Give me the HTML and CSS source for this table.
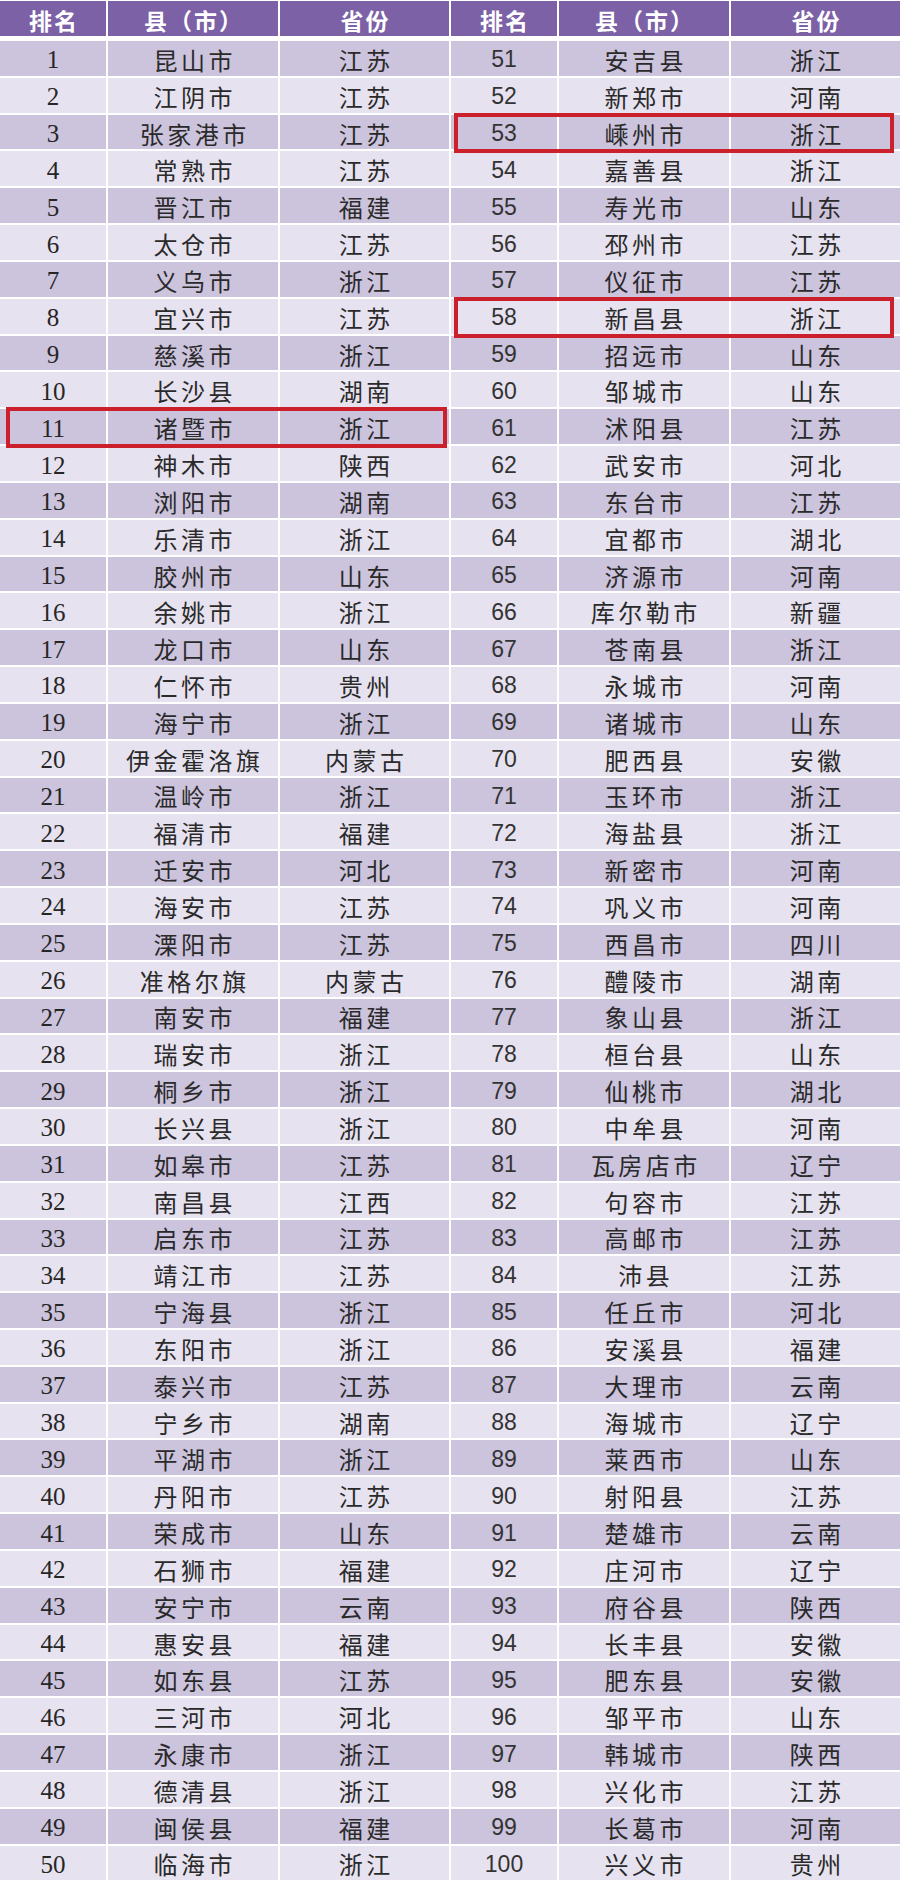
FILE: index.html
```html
<!DOCTYPE html>
<html lang="zh-CN">
<head>
<meta charset="utf-8">
<title>县市排名</title>
<link rel="stylesheet" href="styles.css">
</head>
<body>
<div class="sheet">
  <div class="half left">
    <div class="row head"><div class="c">排名</div><div class="c">县（市）</div><div class="c">省份</div></div>
    <div class="body">
      <div class="row"><div class="c n">1</div><div class="c t">昆山市</div><div class="c t">江苏</div></div>
      <div class="row"><div class="c n">2</div><div class="c t">江阴市</div><div class="c t">江苏</div></div>
      <div class="row"><div class="c n">3</div><div class="c t">张家港市</div><div class="c t">江苏</div></div>
      <div class="row"><div class="c n">4</div><div class="c t">常熟市</div><div class="c t">江苏</div></div>
      <div class="row"><div class="c n">5</div><div class="c t">晋江市</div><div class="c t">福建</div></div>
      <div class="row"><div class="c n">6</div><div class="c t">太仓市</div><div class="c t">江苏</div></div>
      <div class="row"><div class="c n">7</div><div class="c t">义乌市</div><div class="c t">浙江</div></div>
      <div class="row"><div class="c n">8</div><div class="c t">宜兴市</div><div class="c t">江苏</div></div>
      <div class="row"><div class="c n">9</div><div class="c t">慈溪市</div><div class="c t">浙江</div></div>
      <div class="row"><div class="c n">10</div><div class="c t">长沙县</div><div class="c t">湖南</div></div>
      <div class="row mark"><div class="c n">11</div><div class="c t">诸暨市</div><div class="c t">浙江</div></div>
      <div class="row"><div class="c n">12</div><div class="c t">神木市</div><div class="c t">陕西</div></div>
      <div class="row"><div class="c n">13</div><div class="c t">浏阳市</div><div class="c t">湖南</div></div>
      <div class="row"><div class="c n">14</div><div class="c t">乐清市</div><div class="c t">浙江</div></div>
      <div class="row"><div class="c n">15</div><div class="c t">胶州市</div><div class="c t">山东</div></div>
      <div class="row"><div class="c n">16</div><div class="c t">余姚市</div><div class="c t">浙江</div></div>
      <div class="row"><div class="c n">17</div><div class="c t">龙口市</div><div class="c t">山东</div></div>
      <div class="row"><div class="c n">18</div><div class="c t">仁怀市</div><div class="c t">贵州</div></div>
      <div class="row"><div class="c n">19</div><div class="c t">海宁市</div><div class="c t">浙江</div></div>
      <div class="row"><div class="c n">20</div><div class="c t">伊金霍洛旗</div><div class="c t">内蒙古</div></div>
      <div class="row"><div class="c n">21</div><div class="c t">温岭市</div><div class="c t">浙江</div></div>
      <div class="row"><div class="c n">22</div><div class="c t">福清市</div><div class="c t">福建</div></div>
      <div class="row"><div class="c n">23</div><div class="c t">迁安市</div><div class="c t">河北</div></div>
      <div class="row"><div class="c n">24</div><div class="c t">海安市</div><div class="c t">江苏</div></div>
      <div class="row"><div class="c n">25</div><div class="c t">溧阳市</div><div class="c t">江苏</div></div>
      <div class="row"><div class="c n">26</div><div class="c t">准格尔旗</div><div class="c t">内蒙古</div></div>
      <div class="row"><div class="c n">27</div><div class="c t">南安市</div><div class="c t">福建</div></div>
      <div class="row"><div class="c n">28</div><div class="c t">瑞安市</div><div class="c t">浙江</div></div>
      <div class="row"><div class="c n">29</div><div class="c t">桐乡市</div><div class="c t">浙江</div></div>
      <div class="row"><div class="c n">30</div><div class="c t">长兴县</div><div class="c t">浙江</div></div>
      <div class="row"><div class="c n">31</div><div class="c t">如皋市</div><div class="c t">江苏</div></div>
      <div class="row"><div class="c n">32</div><div class="c t">南昌县</div><div class="c t">江西</div></div>
      <div class="row"><div class="c n">33</div><div class="c t">启东市</div><div class="c t">江苏</div></div>
      <div class="row"><div class="c n">34</div><div class="c t">靖江市</div><div class="c t">江苏</div></div>
      <div class="row"><div class="c n">35</div><div class="c t">宁海县</div><div class="c t">浙江</div></div>
      <div class="row"><div class="c n">36</div><div class="c t">东阳市</div><div class="c t">浙江</div></div>
      <div class="row"><div class="c n">37</div><div class="c t">泰兴市</div><div class="c t">江苏</div></div>
      <div class="row"><div class="c n">38</div><div class="c t">宁乡市</div><div class="c t">湖南</div></div>
      <div class="row"><div class="c n">39</div><div class="c t">平湖市</div><div class="c t">浙江</div></div>
      <div class="row"><div class="c n">40</div><div class="c t">丹阳市</div><div class="c t">江苏</div></div>
      <div class="row"><div class="c n">41</div><div class="c t">荣成市</div><div class="c t">山东</div></div>
      <div class="row"><div class="c n">42</div><div class="c t">石狮市</div><div class="c t">福建</div></div>
      <div class="row"><div class="c n">43</div><div class="c t">安宁市</div><div class="c t">云南</div></div>
      <div class="row"><div class="c n">44</div><div class="c t">惠安县</div><div class="c t">福建</div></div>
      <div class="row"><div class="c n">45</div><div class="c t">如东县</div><div class="c t">江苏</div></div>
      <div class="row"><div class="c n">46</div><div class="c t">三河市</div><div class="c t">河北</div></div>
      <div class="row"><div class="c n">47</div><div class="c t">永康市</div><div class="c t">浙江</div></div>
      <div class="row"><div class="c n">48</div><div class="c t">德清县</div><div class="c t">浙江</div></div>
      <div class="row"><div class="c n">49</div><div class="c t">闽侯县</div><div class="c t">福建</div></div>
      <div class="row"><div class="c n">50</div><div class="c t">临海市</div><div class="c t">浙江</div></div>
    </div>
  </div>
  <div class="half right">
    <div class="row head"><div class="c">排名</div><div class="c">县（市）</div><div class="c">省份</div></div>
    <div class="body">
      <div class="row"><div class="c n">51</div><div class="c t">安吉县</div><div class="c t">浙江</div></div>
      <div class="row"><div class="c n">52</div><div class="c t">新郑市</div><div class="c t">河南</div></div>
      <div class="row mark"><div class="c n">53</div><div class="c t">嵊州市</div><div class="c t">浙江</div></div>
      <div class="row"><div class="c n">54</div><div class="c t">嘉善县</div><div class="c t">浙江</div></div>
      <div class="row"><div class="c n">55</div><div class="c t">寿光市</div><div class="c t">山东</div></div>
      <div class="row"><div class="c n">56</div><div class="c t">邳州市</div><div class="c t">江苏</div></div>
      <div class="row"><div class="c n">57</div><div class="c t">仪征市</div><div class="c t">江苏</div></div>
      <div class="row mark"><div class="c n">58</div><div class="c t">新昌县</div><div class="c t">浙江</div></div>
      <div class="row"><div class="c n">59</div><div class="c t">招远市</div><div class="c t">山东</div></div>
      <div class="row"><div class="c n">60</div><div class="c t">邹城市</div><div class="c t">山东</div></div>
      <div class="row"><div class="c n">61</div><div class="c t">沭阳县</div><div class="c t">江苏</div></div>
      <div class="row"><div class="c n">62</div><div class="c t">武安市</div><div class="c t">河北</div></div>
      <div class="row"><div class="c n">63</div><div class="c t">东台市</div><div class="c t">江苏</div></div>
      <div class="row"><div class="c n">64</div><div class="c t">宜都市</div><div class="c t">湖北</div></div>
      <div class="row"><div class="c n">65</div><div class="c t">济源市</div><div class="c t">河南</div></div>
      <div class="row"><div class="c n">66</div><div class="c t">库尔勒市</div><div class="c t">新疆</div></div>
      <div class="row"><div class="c n">67</div><div class="c t">苍南县</div><div class="c t">浙江</div></div>
      <div class="row"><div class="c n">68</div><div class="c t">永城市</div><div class="c t">河南</div></div>
      <div class="row"><div class="c n">69</div><div class="c t">诸城市</div><div class="c t">山东</div></div>
      <div class="row"><div class="c n">70</div><div class="c t">肥西县</div><div class="c t">安徽</div></div>
      <div class="row"><div class="c n">71</div><div class="c t">玉环市</div><div class="c t">浙江</div></div>
      <div class="row"><div class="c n">72</div><div class="c t">海盐县</div><div class="c t">浙江</div></div>
      <div class="row"><div class="c n">73</div><div class="c t">新密市</div><div class="c t">河南</div></div>
      <div class="row"><div class="c n">74</div><div class="c t">巩义市</div><div class="c t">河南</div></div>
      <div class="row"><div class="c n">75</div><div class="c t">西昌市</div><div class="c t">四川</div></div>
      <div class="row"><div class="c n">76</div><div class="c t">醴陵市</div><div class="c t">湖南</div></div>
      <div class="row"><div class="c n">77</div><div class="c t">象山县</div><div class="c t">浙江</div></div>
      <div class="row"><div class="c n">78</div><div class="c t">桓台县</div><div class="c t">山东</div></div>
      <div class="row"><div class="c n">79</div><div class="c t">仙桃市</div><div class="c t">湖北</div></div>
      <div class="row"><div class="c n">80</div><div class="c t">中牟县</div><div class="c t">河南</div></div>
      <div class="row"><div class="c n">81</div><div class="c t">瓦房店市</div><div class="c t">辽宁</div></div>
      <div class="row"><div class="c n">82</div><div class="c t">句容市</div><div class="c t">江苏</div></div>
      <div class="row"><div class="c n">83</div><div class="c t">高邮市</div><div class="c t">江苏</div></div>
      <div class="row"><div class="c n">84</div><div class="c t">沛县</div><div class="c t">江苏</div></div>
      <div class="row"><div class="c n">85</div><div class="c t">任丘市</div><div class="c t">河北</div></div>
      <div class="row"><div class="c n">86</div><div class="c t">安溪县</div><div class="c t">福建</div></div>
      <div class="row"><div class="c n">87</div><div class="c t">大理市</div><div class="c t">云南</div></div>
      <div class="row"><div class="c n">88</div><div class="c t">海城市</div><div class="c t">辽宁</div></div>
      <div class="row"><div class="c n">89</div><div class="c t">莱西市</div><div class="c t">山东</div></div>
      <div class="row"><div class="c n">90</div><div class="c t">射阳县</div><div class="c t">江苏</div></div>
      <div class="row"><div class="c n">91</div><div class="c t">楚雄市</div><div class="c t">云南</div></div>
      <div class="row"><div class="c n">92</div><div class="c t">庄河市</div><div class="c t">辽宁</div></div>
      <div class="row"><div class="c n">93</div><div class="c t">府谷县</div><div class="c t">陕西</div></div>
      <div class="row"><div class="c n">94</div><div class="c t">长丰县</div><div class="c t">安徽</div></div>
      <div class="row"><div class="c n">95</div><div class="c t">肥东县</div><div class="c t">安徽</div></div>
      <div class="row"><div class="c n">96</div><div class="c t">邹平市</div><div class="c t">山东</div></div>
      <div class="row"><div class="c n">97</div><div class="c t">韩城市</div><div class="c t">陕西</div></div>
      <div class="row"><div class="c n">98</div><div class="c t">兴化市</div><div class="c t">江苏</div></div>
      <div class="row"><div class="c n">99</div><div class="c t">长葛市</div><div class="c t">河南</div></div>
      <div class="row"><div class="c n">100</div><div class="c t">兴义市</div><div class="c t">贵州</div></div>
    </div>
  </div>
</div>
</body>
</html>
```

FILE: styles.css
```css
html, body {
  margin: 0;
  padding: 0;
  background: #ffffff;
}

.sheet {
  width: 900px;
  height: 1883px;
  display: flex;
  column-gap: 2px;
  overflow: hidden;
  background: #ffffff;
}

.half {
  width: 449px;
  display: flex;
  flex-direction: column;
  padding-top: 1px;
}

.row {
  display: grid;
  grid-template-columns: 106px 170px 1fr;
  column-gap: 2px;
  height: 34.83px;
  position: relative;
}

.row.head {
  height: 35px;
  margin-bottom: 5px;
}

.body {
  display: flex;
  flex-direction: column;
  row-gap: 2px;
}

.c {
  display: flex;
  align-items: center;
  justify-content: center;
  padding-top: 3px;
  box-sizing: border-box;
  color: #262626;
  font-family: "Noto Sans CJK SC", "Noto Sans", sans-serif;
  font-size: 24px;
  line-height: 1;
}

.head .c {
  background: #7c61a7;
  color: #ffffff;
  font-weight: 700;
  font-size: 23px;
  letter-spacing: 2px;
  padding-left: 2px;
}

.body .row:nth-child(odd) .c {
  background: #ccc3dd;
}

.body .row:nth-child(even) .c {
  background: #e7e2ef;
}

.c.t {
  letter-spacing: 3.5px;
  padding-left: 3.5px;
  color: #2a2a2a;
}

.c.n {
  font-family: "Liberation Serif", "Times New Roman", serif;
  font-size: 25px;
  color: #262626;
}

.right .c.n {
  font-family: "Liberation Sans", Arial, sans-serif;
  font-size: 23px;
  color: #333333;
}

.row.mark {
  z-index: 2;
}

.row.mark::after {
  content: "";
  position: absolute;
  top: -2px;
  bottom: -4px;
  left: 6px;
  right: 2px;
  border: 4px solid #cc1f2c;
  pointer-events: none;
}

.right .row.mark::after {
  left: 3px;
  right: 6px;
}
```
